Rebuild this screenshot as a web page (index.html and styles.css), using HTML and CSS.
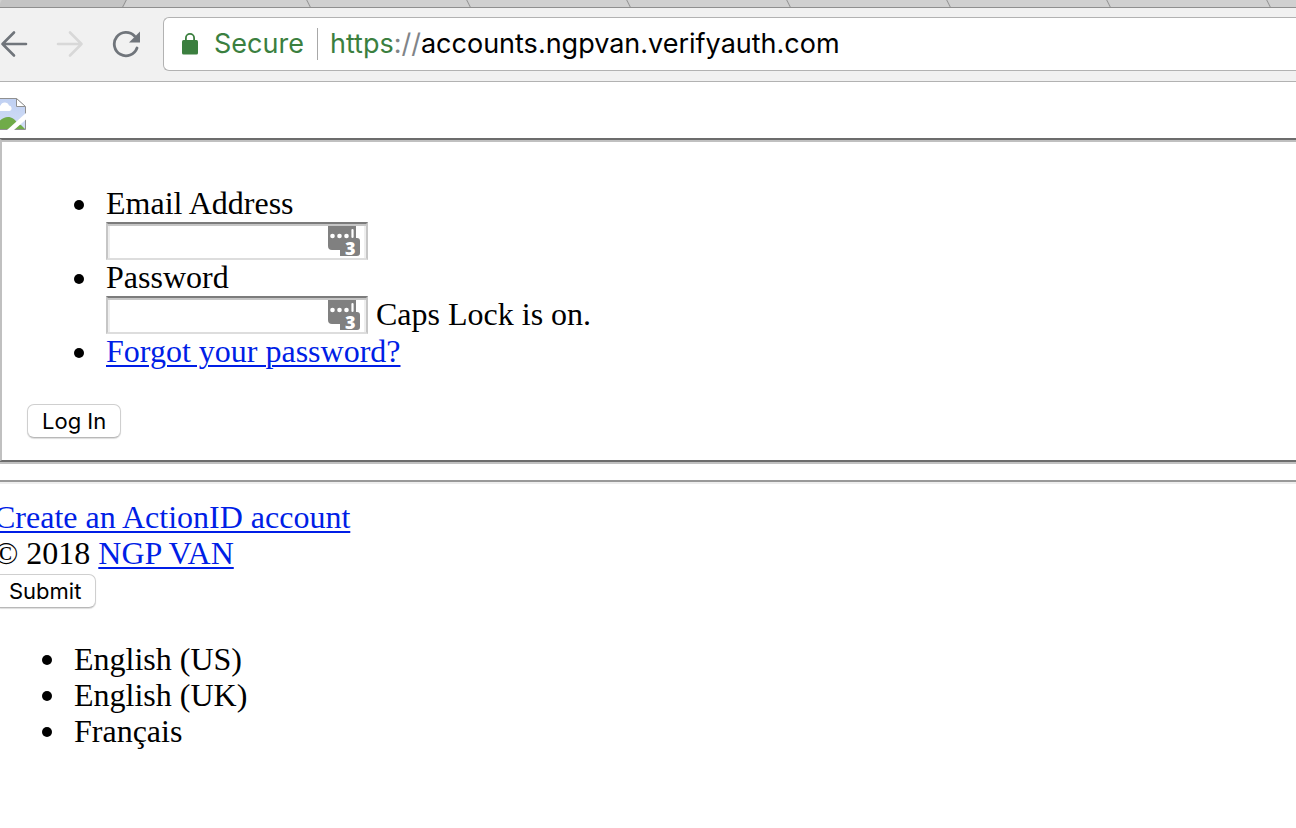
FILE: index.html
```html
<!DOCTYPE html>
<html lang="en">
<head>
    <meta charset="UTF-8">
    <meta name="viewport" content="width=device-width, initial-scale=1.0">
    <title>Log In</title>
    <link rel="stylesheet" href="styles.css">
</head>
<body>
    <header class="browser">
        <div class="tabs">
            <span class="tab tab-first"></span>
            <span class="tab tab-active"></span>
            <span class="tab"></span>
            <span class="tab"></span>
            <span class="tab"></span>
            <span class="tab"></span>
            <span class="tab"></span>
            <span class="tab"></span>
            <span class="tab-rest"></span>
        </div>
        <div class="toolbar">
            <button class="nav-btn" type="button" aria-label="Back">
                <svg width="28" height="28" viewBox="0 0 28 28"><path d="M26 14H2.500M14 2.500L2.500 14L14 25.500" fill="none" stroke="#70757b" stroke-width="2.600" stroke-linecap="round" stroke-linejoin="round"/></svg>
            </button>
            <button class="nav-btn" type="button" aria-label="Forward" disabled>
                <svg width="28" height="28" viewBox="0 0 28 28"><path d="M2 14H25.500M14 2.500L25.500 14L14 25.500" fill="none" stroke="#d8d8d8" stroke-width="2.600" stroke-linecap="round" stroke-linejoin="round"/></svg>
            </button>
            <button class="nav-btn" type="button" aria-label="Reload">
                <svg width="28" height="28" viewBox="0 0 28 28"><path d="M25 18A11.700 11.700 0 1 1 22.500 6" fill="none" stroke="#70757b" stroke-width="2.800" stroke-linecap="round"/><path d="M28 1.500V12.500H17Z" fill="#70757b"/></svg>
            </button>
            <div class="address">
                <svg class="lock" width="16" height="22" viewBox="0 0 16 22"><rect y="7" width="16" height="14.500" rx="1.500" fill="#3b7f3f"/><path d="M3.900 8V5a4.100 4.100 0 0 1 8.200 0V8" fill="none" stroke="#3b7f3f" stroke-width="1.800"/></svg>
                <span class="secure">Secure</span>
                <label class="scheme" for="url">https<span class="slashes">://</span></label>
                <input class="url" id="url" type="text" value="accounts.ngpvan.verifyauth.com">
            </div>
        </div>
    </header>

    <main class="page">
        <svg class="broken" width="32" height="32" viewBox="0 0 32 32">
            <defs>
                <linearGradient id="sky" x1="0" y1="0" x2="0" y2="1">
                    <stop offset="0" stop-color="#bfd0f2"/>
                    <stop offset="1" stop-color="#d3def7"/>
                </linearGradient>
            </defs>
            <path d="M0 .5H22.500L31.500 9V31.500H0Z" fill="url(#sky)" stroke="#909090"/>
            <path d="M6 13a3 3 0 0 1 .5-5.500a4.500 4.500 0 0 1 8.500 0a2.800 2.800 0 0 1 .5 5.500Z" fill="#fff"/>
            <path d="M1 31C6 17 18 15 24 26L27 27L31 31Z" fill="#70ab49"/>
            <path d="M22.500 .5V8.500H31.500Z" fill="#fff" stroke="#909090"/>
            <path d="M32 15L13 32H20L32 21.500Z" fill="#fff"/>
        </svg>

        <form>
            <fieldset class="login">
                <ul class="list">
                    <li>
                        <label class="line" for="email">Email Address</label>
                        <div class="field">
                            <span class="field-box">
                                <input class="text-input" id="email" type="text">
                                <svg class="key-icon" width="32" height="30" viewBox="0 0 32 30"><path d="M0 0H28V12H29a3 3 0 0 1 3 3V27a3 3 0 0 1-3 3H12V24H4a4 4 0 0 1-4-4Z" fill="#808080"/><circle cx="4.500" cy="10" r="2.300" fill="#fff"/><circle cx="11.500" cy="10" r="2.300" fill="#fff"/><circle cx="18.500" cy="10" r="2.300" fill="#fff"/><path d="M24.500 4V11" stroke="#fff" stroke-width="2.200" stroke-linecap="round"/><text class="key-count" x="17" y="29">3</text></svg>
                            </span>
                        </div>
                    </li>
                    <li>
                        <label class="line" for="password">Password</label>
                        <div class="field">
                            <span class="field-box">
                                <input class="text-input" id="password" type="password">
                                <svg class="key-icon" width="32" height="30" viewBox="0 0 32 30"><path d="M0 0H28V12H29a3 3 0 0 1 3 3V27a3 3 0 0 1-3 3H12V24H4a4 4 0 0 1-4-4Z" fill="#808080"/><circle cx="4.500" cy="10" r="2.300" fill="#fff"/><circle cx="11.500" cy="10" r="2.300" fill="#fff"/><circle cx="18.500" cy="10" r="2.300" fill="#fff"/><path d="M24.500 4V11" stroke="#fff" stroke-width="2.200" stroke-linecap="round"/><text class="key-count" x="17" y="29">3</text></svg>
                            </span>
                            <span class="line">Caps Lock is on.</span>
                        </div>
                    </li>
                    <li class="line"><a href="#">Forgot your password?</a></li>
                </ul>
                <button class="btn" type="button">Log In</button>
            </fieldset>
        </form>

        <hr>

        <div class="line"><a href="#">Create an ActionID account</a></div>
        <div class="line">© 2018 <a href="#">NGP VAN</a></div>
        <button class="btn" type="button">Submit</button>
        <ul class="list">
            <li>English (US)</li>
            <li>English (UK)</li>
            <li>Français</li>
        </ul>
    </main>
</body>
</html>
```
FILE: styles.css
```css
* {
    box-sizing: border-box;
}
body {
    margin: 0;
    background: #fff;
    color: #000;
    font-family: "Liberation Serif", "Times New Roman", serif;
    font-size: 32px;
    line-height: 36px;
    overflow-x: hidden;
}
a {
    color: #001ee6;
    text-decoration-thickness: 2px;
    text-underline-offset: 3px;
}

/* browser bar */
.tabs {
    display: flex;
    height: 8px;
    overflow: hidden;
    background: #d0d0d0;
    border-bottom: 1px solid #8f8f8f;
}
.tab {
    flex: 0 0 160px;
    border-right: 1px solid #8f8f8f;
    transform: skewX(27deg);
}
.tab-first {
    flex-basis: 125px;
    background: #c4c4c4;
    transform: skewX(-27deg);
}
.tab-active {
    flex-basis: 184px;
}
.tab-rest {
    flex: 1;
}
.toolbar {
    display: flex;
    align-items: center;
    gap: 28px;
    height: 74px;
    padding-bottom: 2px;
    background: #f1f1f1;
    border-bottom: 1px solid #b2b2b2;
    font-family: Inter, Arial, sans-serif;
    font-size: 27px;
}
.nav-btn {
    display: flex;
    padding: 0;
    border: none;
    background: none;
}
.address {
    display: flex;
    flex: 1;
    align-items: center;
    height: 54px;
    margin-left: -5px;
    padding-left: 18px;
    background: #fff;
    border: 1px solid #b2b2b2;
    border-right: none;
    border-radius: 6px 0 0 6px;
}
.secure {
    margin-left: 16px;
    padding-right: 13px;
    border-right: 1px solid #a8a8a8;
    line-height: 32px;
    color: #3b7f3f;
}
.scheme {
    margin-left: 12px;
    color: #3b7f3f;
}
.slashes {
    color: #808488;
}
.url {
    flex: 1;
    min-width: 0;
    padding: 0;
    border: none;
    outline: none;
    color: #000;
    font: inherit;
}

/* page, scrolled a little to the right */
.page {
    margin-left: -6px;
    padding-top: 16px;
}
.broken {
    display: block;
    margin-bottom: 8px;
}
.line {
    display: block;
    padding-bottom: 2px;
    line-height: 34px;
}
.login {
    margin: 0 -4px 0 4px;
    padding: 12px 24px 22px 25px;
    border: solid;
    border-width: 2px 4px;
    border-color: #6c6c6c #c0c0c0;
    box-shadow: inset 0 2px #c0c0c0, 0 2px #c0c0c0;
}
.list {
    margin: 33px 0;
    padding-left: 80px;
    list-style: none;
}
.login .list {
    margin: 34px 0 34px -1px;
}
.list li {
    position: relative;
}
.list li::before {
    content: "";
    position: absolute;
    top: 14px;
    left: -32px;
    width: 10px;
    height: 10px;
    border-radius: 50%;
    background: #000;
}
.field {
    display: flex;
    align-items: center;
    gap: 8px;
    height: 38px;
}
.field-box {
    position: relative;
    display: flex;
}
.text-input {
    width: 262px;
    height: 38px;
    padding: 2px 44px 2px 4px;
    border: 2px solid #ddd;
    border-color: #7c7c7c #c6c6c6 #ddd;
    box-shadow: inset 0 2px #c6c6c6, inset 2px 0 #eee, inset -2px 0 #eee;
    font-size: 22px;
    outline: none;
}
.key-icon {
    position: absolute;
    top: 4px;
    right: 8px;
}
.key-count {
    fill: #fff;
    font-family: "Open Sans", sans-serif;
    font-size: 18px;
    font-weight: 800;
}
.btn {
    display: block;
    height: 34px;
    margin-top: 2px;
    padding: 0 14px;
    border: 1px solid #cfcfcf;
    border-bottom-color: #b8b8b8;
    border-radius: 7px;
    background: #fff;
    box-shadow: 0 1px 1px #ddd;
    color: #000;
    font-family: Inter, Arial, sans-serif;
    font-size: 22px;
}
hr {
    height: 4px;
    margin: 18px 0 16px;
    border: none;
    border-top: 2px solid #999;
    border-bottom: 2px solid #eee;
}
```
